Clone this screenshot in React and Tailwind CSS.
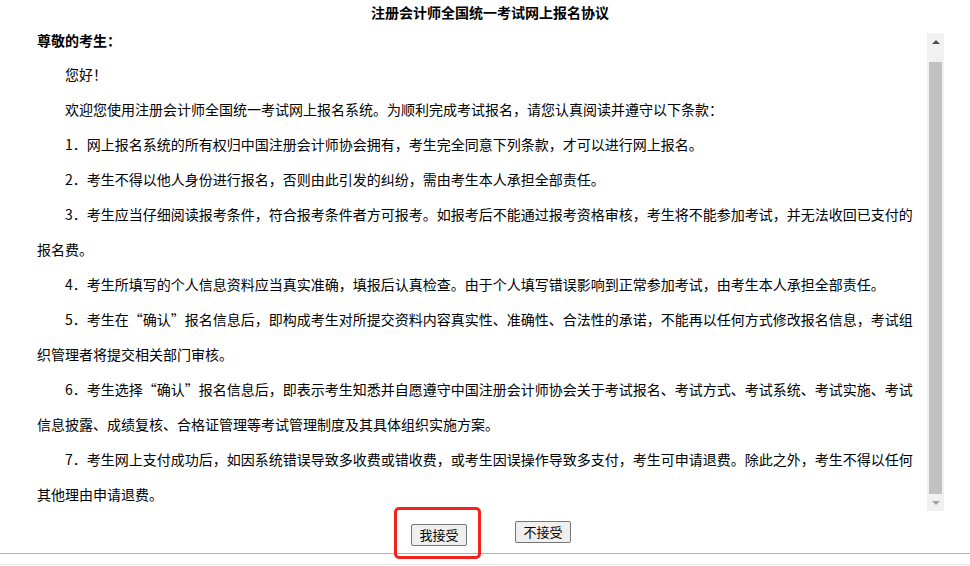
const lines = [
  { text: "您好！", indent: true },
  { text: "欢迎您使用注册会计师全国统一考试网上报名系统。为顺利完成考试报名，请您认真阅读并遵守以下条款：", indent: true },
  { text: "1．网上报名系统的所有权归中国注册会计师协会拥有，考生完全同意下列条款，才可以进行网上报名。", indent: true },
  { text: "2．考生不得以他人身份进行报名，否则由此引发的纠纷，需由考生本人承担全部责任。", indent: true },
  { text: "3．考生应当仔细阅读报考条件，符合报考条件者方可报考。如报考后不能通过报考资格审核，考生将不能参加考试，并无法收回已支付的", indent: true },
  { text: "报名费。" },
  { text: "4．考生所填写的个人信息资料应当真实准确，填报后认真检查。由于个人填写错误影响到正常参加考试，由考生本人承担全部责任。", indent: true },
  { text: "5．考生在“确认”报名信息后，即构成考生对所提交资料内容真实性、准确性、合法性的承诺，不能再以任何方式修改报名信息，考试组", indent: true },
  { text: "织管理者将提交相关部门审核。" },
  { text: "6．考生选择“确认”报名信息后，即表示考生知悉并自愿遵守中国注册会计师协会关于考试报名、考试方式、考试系统、考试实施、考试", indent: true },
  { text: "信息披露、成绩复核、合格证管理等考试管理制度及其具体组织实施方案。" },
  { text: "7．考生网上支付成功后，如因系统错误导致多收费或错收费，或考生因误操作导致多支付，考生可申请退费。除此之外，考生不得以任何", indent: true },
  { text: "其他理由申请退费。" },
];

function Scrollbar() {
  return (
    <div className="w-[17px] h-full bg-[#f1f1f1] flex flex-col items-center">
      <div className="h-[17px] w-full flex items-center justify-center">
        <div className="w-0 h-0 border-l-[4px] border-r-[4px] border-b-[4px] border-l-transparent border-r-transparent border-b-[#505050]" />
      </div>
      <div className="flex-1 w-full flex flex-col px-[2px] pt-[12px]">
        <div className="flex-1 bg-[#c1c1c1]" />
      </div>
      <div className="h-[17px] w-full flex items-center justify-center">
        <div className="w-0 h-0 border-l-[4px] border-r-[4px] border-t-[4px] border-l-transparent border-r-transparent border-t-[#a3a3a3]" />
      </div>
    </div>
  );
}

function Btn({ label }) {
  return (
    <button className="w-[56px] h-[22px] bg-[#efefef] border border-[#767676] rounded-[2px] text-[13px] leading-[20px] text-black">
      {label}
    </button>
  );
}

export default function App() {
  return (
    <div
      className="w-[970px] h-[566px] bg-white text-black overflow-hidden flex flex-col"
      style={{ fontFamily: '"Noto Sans CJK SC", "Noto Sans", sans-serif' }}
    >
      <div className="h-[33px] pt-[3px] pl-[10px] text-center text-[14px] font-bold leading-[18px]">
        注册会计师全国统一考试网上报名协议
      </div>

      <div className="h-[478px] flex pl-[37px] pr-[26px]">
        <div className="flex-1 text-[14px]">
          <div className="font-bold leading-[20px] -mt-[3px] mb-[7px]">尊敬的考生：</div>
          <div className="leading-[35px]">
            {lines.map((l, i) => (
              <div
                key={i}
                className={"whitespace-nowrap " + (l.indent ? "pl-[28px]" : "")}
              >
                {l.text}
              </div>
            ))}
          </div>
        </div>
        <Scrollbar />
      </div>

      <div className="h-[43px] flex justify-center items-start pt-[10px] pl-[12px] gap-[48px] border-b border-[#b4b4b4]">
        <div className="relative">
          <Btn label="我接受" />
          <span className="absolute -left-[17px] -right-[14px] -top-[14px] -bottom-[13px] border-[3px] border-[#f5221b] rounded-[5px] pointer-events-none" />
        </div>
        <Btn label="不接受" />
      </div>

      <div className="h-[11px] border-b border-[#e6e6e6]" />
    </div>
  );
}
